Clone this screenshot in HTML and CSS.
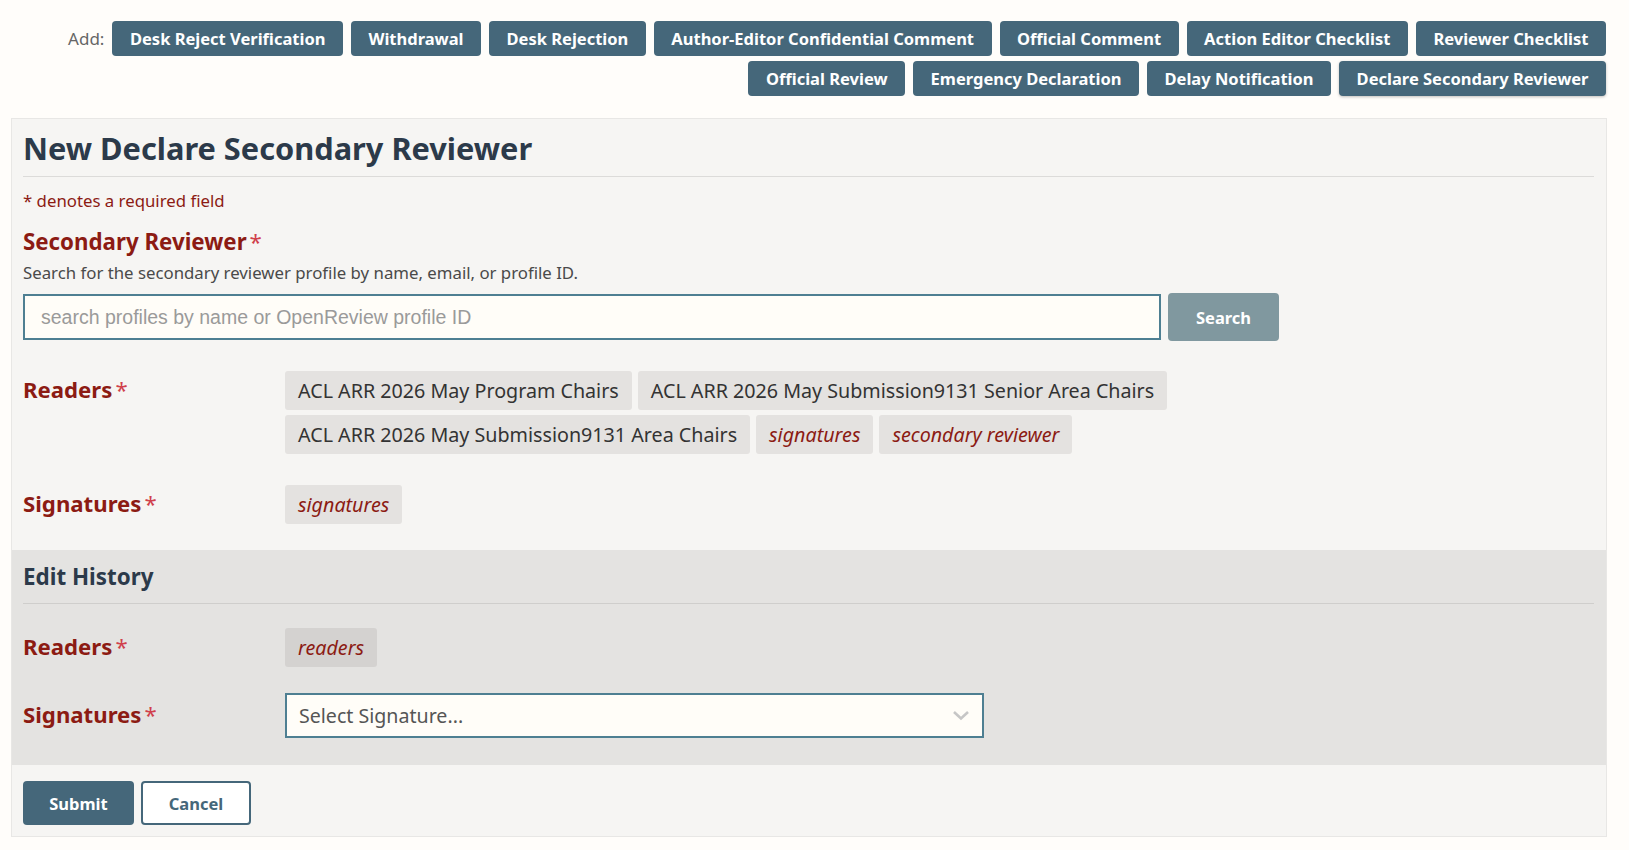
FILE: index.html
```html
<!DOCTYPE html>
<html lang="en">
<head>
    <meta charset="UTF-8">
    <meta name="viewport" content="width=device-width, initial-scale=1.0">
    <title>New Declare Secondary Reviewer</title>
    <link rel="stylesheet" href="styles.css">
</head>
<body>

    <div class="invitation-bar">
        <span class="add-label">Add:</span>
        <button class="btn">Desk Reject Verification</button>
        <button class="btn">Withdrawal</button>
        <button class="btn">Desk Rejection</button>
        <button class="btn">Author-Editor Confidential Comment</button>
        <button class="btn">Official Comment</button>
        <button class="btn">Action Editor Checklist</button>
        <button class="btn">Reviewer Checklist</button>
        <button class="btn">Official Review</button>
        <button class="btn">Emergency Declaration</button>
        <button class="btn">Delay Notification</button>
        <button class="btn btn-active">Declare Secondary Reviewer</button>
    </div>

    <div class="note-editor">
        <div class="editor-body">
            <h2 class="editor-title">New Declare Secondary Reviewer</h2>
            <div class="required-hint">* denotes a required field</div>

            <div class="field">
                <div class="field-title">Secondary Reviewer<span class="req">*</span></div>
                <div class="field-desc">Search for the secondary reviewer profile by name, email, or profile ID.</div>
                <div class="search-row">
                    <input class="search-input" type="text" placeholder="search profiles by name or OpenReview profile ID">
                    <button class="btn btn-search">Search</button>
                </div>
            </div>

            <div class="field-row readers-row">
                <div class="row-label">Readers<span class="req">*</span></div>
                <div class="tags">
                    <span class="tag">ACL ARR 2026 May Program Chairs</span>
                    <span class="tag">ACL ARR 2026 May Submission9131 Senior Area Chairs</span>
                    <span class="tag">ACL ARR 2026 May Submission9131 Area Chairs</span>
                    <span class="tag tag-var">signatures</span>
                    <span class="tag tag-var">secondary reviewer</span>
                </div>
            </div>

            <div class="field-row signatures-row">
                <div class="row-label">Signatures<span class="req">*</span></div>
                <div class="tags">
                    <span class="tag tag-var">signatures</span>
                </div>
            </div>
        </div>

        <div class="edit-history">
            <h3 class="history-title">Edit History</h3>

            <div class="field-row history-readers">
                <div class="row-label">Readers<span class="req">*</span></div>
                <div class="tags">
                    <span class="tag tag-var tag-dark">readers</span>
                </div>
            </div>

            <div class="field-row history-signatures">
                <div class="row-label">Signatures<span class="req">*</span></div>
                <div class="select-box">
                    <span class="select-placeholder">Select Signature...</span>
                    <svg class="select-arrow" width="18" height="11" viewBox="0 0 18 11">
                        <path d="M2 2 L9 8.5 L16 2" fill="none" stroke="#c6c6c6" stroke-width="2.6"/>
                    </svg>
                </div>
            </div>
        </div>

        <div class="editor-actions">
            <button class="btn btn-submit">Submit</button>
            <button class="btn btn-cancel">Cancel</button>
        </div>
    </div>

</body>
</html>
```

FILE: styles.css
```css
body {
    font-family: "Noto Sans", "DejaVu Sans", sans-serif;
    background-color: #fffdfa;
    color: #333333;
    margin: 0;
    padding: 0;
}

.btn {
    font-family: inherit;
    font-size: 16.5px;
    font-weight: 700;
    color: #ffffff;
    background-color: #45677a;
    border: none;
    border-radius: 4px;
    height: 35px;
    padding: 0 17.5px;
    cursor: pointer;
}

/* invitation buttons ---------------------------------------------------- */
.invitation-bar {
    display: flex;
    flex-wrap: wrap;
    justify-content: flex-end;
    align-items: center;
    gap: 5px 8px;
    padding: 21px 23px 0 11px;
}

.add-label {
    color: #666666;
    font-size: 17px;
    line-height: 35px;
}

.btn-active {
    box-shadow: 0 1px 3px rgba(0, 0, 0, 0.25);
}

/* editor panel ---------------------------------------------------------- */
.note-editor {
    box-sizing: border-box;
    width: 1596px;
    margin: 22px 0 0 11px;
    background-color: #f6f5f3;
    border: 1px solid #e8e7e5;
}

.editor-body {
    padding: 0 12px 26px 11px;
}

.editor-title {
    font-size: 30.75px;
    font-weight: 700;
    color: #2c3a4a;
    line-height: 40px;
    margin: 9px 0 0;
    padding-bottom: 8px;
    border-bottom: 1px solid #dcdbd9;
}

.required-hint {
    color: #8c1b13;
    font-size: 16.8px;
    line-height: 22px;
    margin-top: 13px;
}

.field-title {
    color: #8c1b13;
    font-size: 22.3px;
    font-weight: 700;
    line-height: 28px;
    margin-top: 16px;
}

.req {
    color: #d0404b;
    font-weight: 400;
    margin-left: 3px;
}

.field-desc {
    font-size: 16.8px;
    color: #4a4a4a;
    line-height: 20px;
    margin-top: 7px;
}

.search-row {
    display: flex;
    align-items: center;
    gap: 7px;
    margin-top: 10px;
}

.search-input {
    box-sizing: border-box;
    width: 1138px;
    height: 46px;
    border: 2px solid #4e7f92;
    background-color: #fffdf8;
    padding: 0 16px;
    font-family: "Liberation Sans", Arial, sans-serif;
    font-size: 19.5px;
    color: #333333;
}

.search-input::placeholder {
    color: #9a9a9a;
}

.btn-search {
    width: 111px;
    height: 48px;
    background-color: #80989f;
}

/* label / value rows ---------------------------------------------------- */
.field-row {
    display: flex;
    align-items: baseline;
}

.readers-row {
    margin-top: 29px;
}

.signatures-row {
    margin-top: 30px;
}

.row-label {
    width: 262px;
    flex-shrink: 0;
    color: #8c1b13;
    font-size: 22.2px;
    font-weight: 700;
    line-height: 39px;
}

.tags {
    display: flex;
    flex-wrap: wrap;
    gap: 5px 6px;
    max-width: 900px;
}

.tag {
    display: inline-block;
    background-color: #e4e2e0;
    color: #333333;
    font-size: 19.7px;
    line-height: 39px;
    padding: 0 13px;
    border-radius: 3px;
}

.tag-var {
    color: #8c1b13;
    font-style: italic;
}

.tag-dark {
    background-color: #d4d2d0;
}

/* edit history ---------------------------------------------------------- */
.edit-history {
    background-color: #e4e3e1;
    padding: 13px 12px 27px 11px;
}

.history-title {
    font-size: 22.4px;
    font-weight: 700;
    color: #2c3a4a;
    line-height: 28px;
    margin: 0;
    padding-bottom: 12px;
    border-bottom: 1px solid #cfcecc;
}

.history-readers {
    margin-top: 23px;
}

.history-signatures {
    margin-top: 26px;
}

.select-box {
    box-sizing: border-box;
    width: 699px;
    height: 45px;
    display: flex;
    align-items: center;
    justify-content: space-between;
    padding: 0 12px 0 12px;
    border: 2px solid #4e7f92;
    background-color: #fffdf8;
}

.select-placeholder {
    font-size: 19.6px;
    color: #555555;
}

/* submit / cancel ------------------------------------------------------- */
.editor-actions {
    display: flex;
    gap: 7px;
    padding: 16px 11px 11px;
}

.btn-submit {
    width: 111px;
    height: 44px;
}

.btn-cancel {
    width: 110px;
    height: 44px;
    color: #45677a;
    background-color: #ffffff;
    border: 2px solid #45677a;
}
```
